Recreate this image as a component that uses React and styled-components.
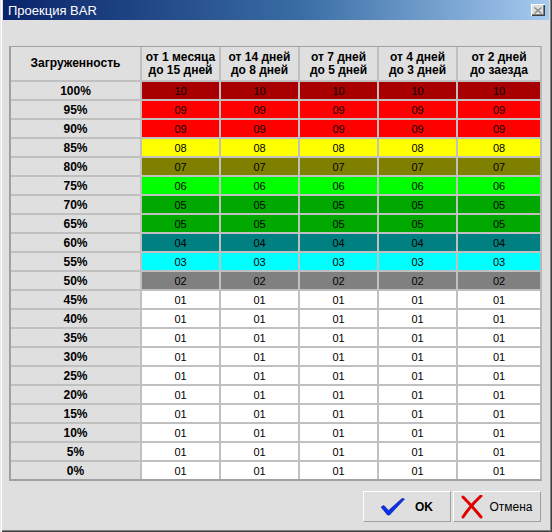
import React from 'react';
import styled, { createGlobalStyle } from 'styled-components';

const GlobalStyle = createGlobalStyle`
  html, body {
    margin: 0;
    padding: 0;
    background: #dfdfdf;
  }
  body {
    font-family: "Liberation Sans", Arial, sans-serif;
  }
`;

const Window = styled.div`
  width: 552px;
  height: 532px;
  box-sizing: border-box;
  background: #dfdfdf;
  padding: 0 3px 3px 3px;
  display: flex;
  flex-direction: column;
  box-shadow: inset 1px 0 #e8e8e8, inset 2px 0 #ffffff, inset -1px -1px #404040,
    inset -2px -2px #808080;
`;

const TitleBar = styled.div`
  height: 20px;
  display: flex;
  align-items: center;
  justify-content: space-between;
  padding: 0 4px 0 5px;
  background: linear-gradient(90deg, #0a246a 0%, #3a6ea5 55%, #a6caf0 100%);
  color: #ffffff;
  font-size: 13px;
`;

const CloseButton = styled.div`
  width: 14px;
  height: 12px;
  background: #dfdfdf;
  display: flex;
  align-items: center;
  justify-content: center;
  box-shadow: inset 1px 1px #ffffff, inset -1px -1px #404040, inset -2px -2px #808080;
`;

const Body = styled.div`
  flex: 1;
  display: flex;
  flex-direction: column;
  padding: 26px 7px 0 7px;
`;

const Grid = styled.div`
  display: grid;
  grid-template-columns: 129px repeat(4, 77px) 1fr;
  grid-template-rows: 33px repeat(21, 17px);
  gap: 2px;
  background: #c0c0c0;
  border-top: 1px solid #a0a0a0;
  border-left: 2px solid #a0a0a0;
  border-bottom: 2px solid #a0a0a0;
  border-right: 2px solid #b8b8b8;
  margin-left: -1px;
`;

const HeadCell = styled.div`
  background: #dfdfdf;
  display: flex;
  align-items: center;
  justify-content: center;
  text-align: center;
  font-weight: bold;
  font-size: 12px;
  line-height: 13px;
  color: #000;
`;

const LabelCell = styled.div`
  background: #dfdfdf;
  display: flex;
  align-items: center;
  justify-content: center;
  font-weight: bold;
  font-size: 12px;
  color: #000;
`;

const ValueCell = styled.div`
  background: ${(p) => p.$bg};
  display: flex;
  align-items: center;
  justify-content: center;
  font-size: 11px;
  color: #000;
`;

const Footer = styled.div`
  display: flex;
  justify-content: flex-end;
  gap: 2px;
  margin-top: 10px;
  padding-right: 1px;
`;

const Button = styled.div`
  width: 88px;
  height: 31px;
  box-sizing: border-box;
  display: flex;
  align-items: center;
  justify-content: center;
  gap: ${(p) => p.$gap || 8}px;
  background: #dfdfdf;
  border: 1px solid;
  border-color: #ffffff #a0a0a0 #a0a0a0 #ffffff;
  font-size: 12px;
  font-weight: ${(p) => (p.$bold ? 'bold' : 'normal')};
  color: #000;
`;

const headers = [
  ['Загруженность'],
  ['от 1 месяца', 'до 15 дней'],
  ['от 14 дней', 'до 8 дней'],
  ['от 7 дней', 'до 5 дней'],
  ['от 4 дней', 'до 3 дней'],
  ['от 2 дней', 'до заезда'],
];

const levels = [
  ['#a80000', '10'],
  ['#ff0000', '09'],
  ['#ff0000', '09'],
  ['#ffff00', '08'],
  ['#808000', '07'],
  ['#00ff00', '06'],
  ['#00a800', '05'],
  ['#00a800', '05'],
  ['#008080', '04'],
  ['#00ffff', '03'],
  ['#808080', '02'],
];

const rows = Array.from({ length: 21 }, (_, i) => {
  const pct = 100 - i * 5;
  const [bg, val] = levels[i] || ['#ffffff', '01'];
  return { label: `${pct}%`, bg, val };
});

function CheckIcon() {
  return (
    <svg width="24" height="18" viewBox="0 0 24 18">
      <polygon
        points="0,9 3,7.5 7.5,12.5 21,0.5 23.5,1 8.5,17 6.5,17"
        fill="#0a30f0"
        stroke="#00108a"
        strokeWidth="0.6"
      />
    </svg>
  );
}

function CrossIcon() {
  return (
    <svg width="22" height="24" viewBox="0 0 22 24">
      <path d="M2 2 Q 11 11 20 22" stroke="#e00000" strokeWidth="3" fill="none" strokeLinecap="round" />
      <path d="M20 1 Q 10 10 2 22" stroke="#e00000" strokeWidth="3" fill="none" strokeLinecap="round" />
    </svg>
  );
}

export default function App() {
  return (
    <>
      <GlobalStyle />
      <Window>
        <TitleBar>
          <span>Проекция BAR</span>
          <CloseButton>
            <svg width="8" height="7" viewBox="0 0 8 7">
              <path d="M0.5 0.5 L7.5 6.5 M7.5 0.5 L0.5 6.5" stroke="#8a8a8a" strokeWidth="1.4" />
            </svg>
          </CloseButton>
        </TitleBar>
        <Body>
          <Grid>
            {headers.map((h, i) => (
              <HeadCell key={i}>
                <span>
                  {h.map((line, j) => (
                    <React.Fragment key={j}>
                      {j > 0 && <br />}
                      {line}
                    </React.Fragment>
                  ))}
                </span>
              </HeadCell>
            ))}
            {rows.map((r) => (
              <React.Fragment key={r.label}>
                <LabelCell>{r.label}</LabelCell>
                {[0, 1, 2, 3, 4].map((c) => (
                  <ValueCell key={c} $bg={r.bg}>
                    {r.val}
                  </ValueCell>
                ))}
              </React.Fragment>
            ))}
          </Grid>
          <Footer>
            <Button $bold $gap={10}>
              <CheckIcon />
              OK
            </Button>
            <Button $gap={6}>
              <CrossIcon />
              Отмена
            </Button>
          </Footer>
        </Body>
      </Window>
    </>
  );
}
